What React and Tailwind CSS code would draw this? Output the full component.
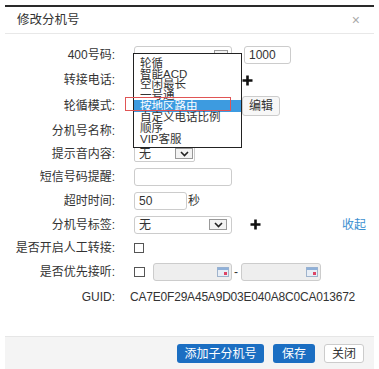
import React from 'react'

const font = { fontFamily: '"Liberation Sans", "Noto Sans CJK SC", sans-serif' }

function Plus({ className = '' }) {
  return (
    <svg width="11" height="11" viewBox="0 0 11 11" className={className}>
      <path d="M5.5 0.5v10M0.5 5.5h10" stroke="#111" strokeWidth="2.6" />
    </svg>
  )
}

function ArrowBox() {
  return (
    <div className="w-[18px] h-[11px] border border-[#999] bg-[#f3f3f3] flex items-center justify-center">
      <svg width="9" height="6" viewBox="0 0 9 6">
        <path d="M1 1l3.5 3.5L8 1" stroke="#222" strokeWidth="1.6" fill="none" />
      </svg>
    </div>
  )
}

function Calendar() {
  return (
    <svg width="12" height="10" viewBox="0 0 12 10">
      <rect x="0.5" y="0.5" width="11" height="9" fill="#e8eef6" stroke="#9fb3cc" />
      <rect x="0.5" y="0.5" width="11" height="2.5" fill="#8fb0d8" />
      <rect x="7" y="5" width="3" height="3" fill="#d46" />
    </svg>
  )
}

function Row({ label, h, children }) {
  return (
    <div className="flex items-center" style={{ height: h }}>
      <div className="w-[110px] text-right text-[12px] text-[#333] whitespace-nowrap">{label}</div>
      <div className="ml-[19px] flex items-center flex-1">{children}</div>
    </div>
  )
}

const items = ['轮循', '智能ACD', '空闲最长', '一号通']
const items2 = ['自定义电话比例', '顺序', 'VIP客服']

export default function App() {
  return (
    <div className="relative w-[379px] h-[369px] bg-white overflow-hidden" style={font}>
      <div className="ml-[5px] mt-[5px] w-[369px] h-[364px] flex flex-col border-t-[2px] border-[#2a2a2a]">
        {/* header */}
        <div className="h-[27px] flex items-center justify-between px-[12px] border-b border-[#e8e8e8]">
          <span className="text-[12.5px] text-[#333]">修改分机号</span>
          <span className="text-[14px] text-[#aaa] mr-[2px]">×</span>
        </div>

        {/* body */}
        <div className="mt-[9px] flex-1">
          <Row label="400号码:" h={24}>
            <div className="w-[98px] h-[18px] border border-[#ccc] rounded-[3px] flex items-center justify-end pr-[3px]">
              <div className="w-[14px] h-[10px] border border-[#999] bg-[#f3f3f3]" />
            </div>
            <div className="ml-[12px] w-[47px] h-[18px] border border-[#ccc] rounded-[3px] text-[12px] text-[#333] pl-[4px] leading-[16px]">1000</div>
          </Row>
          <Row label="转接电话:" h={26}>
            <Plus className="ml-[108px]" />
          </Row>
          <Row label="轮循模式:" h={26}>
            <div className="ml-[108px] w-[38px] h-[20px] border border-[#ccc] rounded-[3px] bg-[#f7f7f7] text-[12px] text-[#333] flex items-center justify-center">编辑</div>
          </Row>
          <Row label="分机号名称:" h={23} />
          <Row label="提示音内容:" h={23}>
            <div className="w-[61px] h-[17px] border border-[#ccc] rounded-[2px] flex items-center justify-between pl-[4px] pr-[1px]">
              <span className="text-[12px] text-[#333]">无</span>
              <ArrowBox />
            </div>
          </Row>
          <Row label="短信号码提醒:" h={24}>
            <div className="w-[98px] h-[18px] border border-[#ccc] rounded-[3px]" />
          </Row>
          <Row label="超时时间:" h={24}>
            <div className="w-[53px] h-[18px] border border-[#ccc] rounded-[3px] text-[12px] text-[#333] pl-[4px] leading-[16px]">50</div>
            <span className="ml-[1px] text-[12px] text-[#333]">秒</span>
          </Row>
          <Row label="分机号标签:" h={23}>
            <div className="w-[98px] h-[18px] border border-[#ccc] rounded-[3px] flex items-center justify-between pl-[4px] pr-[4px]">
              <span className="text-[12px] text-[#333]">无</span>
              <ArrowBox />
            </div>
            <Plus className="ml-[18px]" />
            <span className="ml-auto mr-[8px] text-[12px] text-[#3b8fd0]">收起</span>
          </Row>
          <Row label="是否开启人工转接:" h={23}>
            <div className="w-[10px] h-[10px] border border-[#555]" />
          </Row>
          <Row label="是否优先接听:" h={25}>
            <div className="w-[11px] h-[10px] border border-[#555]" />
            <div className="ml-[8px] w-[79px] h-[18px] border border-[#ccc] rounded-[3px] bg-[#eee] flex items-center justify-end pr-[2px]">
              <Calendar />
            </div>
            <span className="mx-[2px] text-[12px] text-[#333]">-</span>
            <div className="ml-[1px] w-[80px] h-[18px] border border-[#ccc] rounded-[3px] bg-[#eee] flex items-center justify-end pr-[2px]">
              <Calendar />
            </div>
          </Row>
          <Row label="GUID:" h={25}>
            <span className="-ml-[4px] text-[12px] text-[#333] tracking-[-0.2px]">CA7E0F29A45A9D03E040A8C0CA013672</span>
          </Row>
        </div>

        {/* footer */}
        <div className="h-[33px] bg-[#f4f4f4] border-t border-[#e6e6e6] flex items-start justify-end pt-[7px] pr-[10px] gap-[9px]">
          <div className="w-[87px] h-[19px] rounded-[3px] bg-[#1b6ec2] text-white text-[12px] flex items-center justify-center">添加子分机号</div>
          <div className="w-[42px] h-[19px] rounded-[3px] bg-[#1b6ec2] text-white text-[12px] flex items-center justify-center">保存</div>
          <div className="w-[40px] h-[19px] rounded-[3px] bg-white border border-[#ccc] text-[#333] text-[12px] flex items-center justify-center">关闭</div>
        </div>
      </div>

      {/* open select list */}
      <div className="absolute left-[133px] top-[53px] w-[109px] h-[95px] bg-white border-[1.5px] border-[#222] pt-[4px] text-[11.5px] text-[#333]">
        {items.map((t) => (
          <div key={t} className="pl-[6px] h-[10.5px] leading-[10.5px] whitespace-nowrap">{t}</div>
        ))}
        <div className="pl-[6px] h-[12px] leading-[12px] bg-[#3d9be0] text-white whitespace-nowrap">按地区路由</div>
        {items2.map((t) => (
          <div key={t} className="pl-[6px] h-[11px] leading-[11px] whitespace-nowrap">{t}</div>
        ))}
      </div>
      <div className="absolute left-[125px] top-[97px] w-[106px] h-[14px] border border-[#e05555]" />
    </div>
  )
}
